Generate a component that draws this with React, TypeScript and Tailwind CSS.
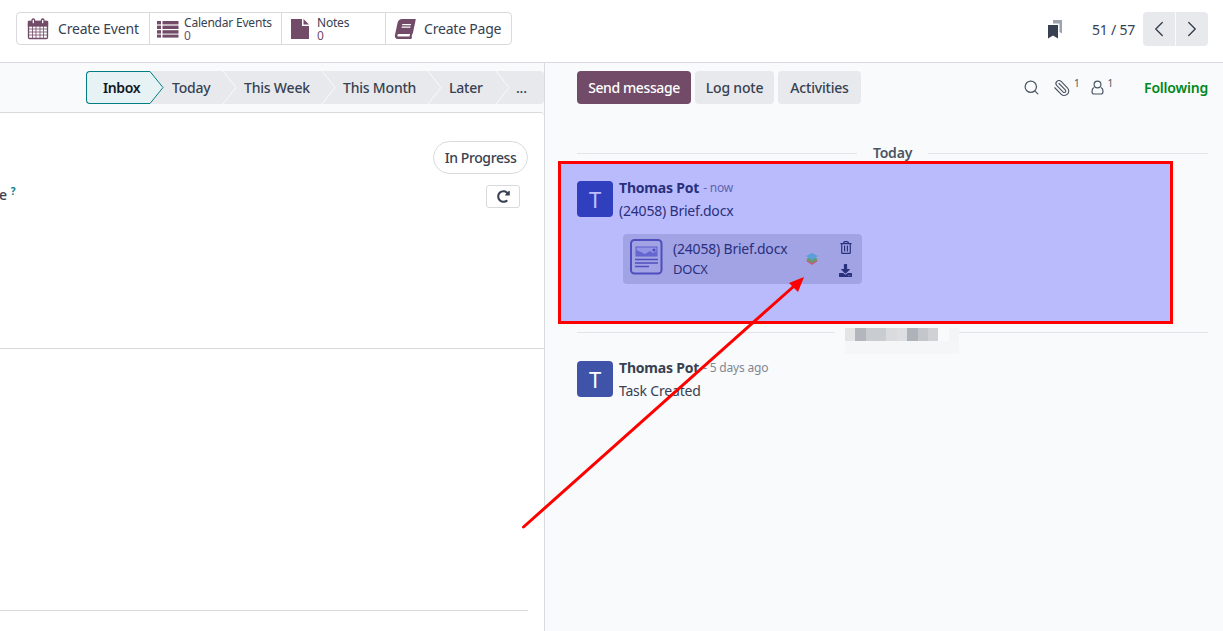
import { ChevronLeft, ChevronRight, Search, Paperclip } from "lucide-react";
import { FaBook, FaDownload, FaRedoAlt, FaRegTrashAlt } from "react-icons/fa";

const FONT = "font-['Noto_Sans',sans-serif]";

function CalendarIcon() {
  return (
    <svg width="22" height="22" viewBox="0 0 22 22" fill="none" stroke="#714b67" strokeWidth="1.3">
      <rect x="1.5" y="3.5" width="19" height="17" rx="1" />
      <rect x="1.5" y="3.5" width="19" height="4.5" fill="#714b67" />
      <path d="M1.5 11h19M1.5 14h19M1.5 17h19M5.5 8v12M9 8v12M13 8v12M16.500 8v12" strokeWidth="1" opacity="0.8" />
      <rect x="5" y="1" width="2.6" height="5" rx="1.2" fill="#fff" />
      <rect x="14.4" y="1" width="2.6" height="5" rx="1.2" fill="#fff" />
    </svg>
  );
}

function ListIcon() {
  return (
    <svg width="22" height="18" viewBox="0 0 22 18" fill="#714b67">
      <rect x="0" y="1" width="4" height="3.4" />
      <rect x="5.5" y="1" width="16" height="3.4" />
      <rect x="0" y="5.6" width="4" height="3.4" />
      <rect x="5.5" y="5.6" width="16" height="3.4" />
      <rect x="0" y="10.2" width="4" height="3.4" />
      <rect x="5.5" y="10.2" width="16" height="3.4" />
      <rect x="0" y="14.6" width="4" height="3" />
      <rect x="5.5" y="14.6" width="16" height="3" />
    </svg>
  );
}

function FileIcon() {
  return (
    <svg width="18" height="20" viewBox="0 0 18 20" fill="#714b67">
      <path d="M0 0h11v7h7v13H0z" />
      <path d="M12.500 0L18 5.500h-5.500z" />
    </svg>
  );
}

function BookmarksIcon() {
  return (
    <svg width="14" height="19" viewBox="0 0 14 19">
      <path d="M5 0h9v13.500L11.500 12V3.500H5z" fill="#9ca3af" />
      <path d="M0 5h10v13.500L5 15.500 0 18.500z" fill="#374151" />
    </svg>
  );
}

function UserIcon() {
  return (
    <svg width="13" height="15" viewBox="0 0 13 15" fill="none" stroke="#4b5563" strokeWidth="1.2">
      <circle cx="6.500" cy="4.500" r="3.400" />
      <path d="M2.800 7.500C1.400 8.500 1 10 1 11.500 1 13 2 14 3 14h7c1 0 2-1 2-2.500 0-1.500-.4-3-1.800-4" />
    </svg>
  );
}

function DocIcon() {
  return (
    <svg width="33" height="36" viewBox="0 0 33 36" fill="none">
      <rect x="1" y="1" width="30.500" height="33.500" rx="3.500" stroke="#6868a8" strokeWidth="2" />
      <rect x="6" y="8" width="21" height="9" fill="#c6c6de" stroke="#6868a8" strokeWidth="0.8" />
      <path d="M6 11l5 2 4 2 5-3 3 2 4-2v5H6z" fill="#8888c0" />
      <circle cx="24" cy="11" r="1.600" fill="#6868a8" />
      <path d="M5 20.500h23M5 24h23M5 27.500h14" stroke="#6868a8" strokeWidth="1.500" />
    </svg>
  );
}

function LayersIcon() {
  return (
    <svg width="14" height="14" viewBox="0 0 14 14">
      <path d="M1 9 7 6l6 3-6 4z" fill="#ff8054" />
      <path d="M1 7 7 4l6 3-6 4z" fill="#7fd43f" />
      <path d="M1 4 7 1l6 3-6 4z" fill="#78d4d0" />
    </svg>
  );
}

function ActionCell({ width, icon, label, count }: { width: string; icon: React.ReactNode; label: string; count?: string }) {
  return (
    <div className={`flex items-center border-r border-[#d8dadd] last:border-r-0 ${width}`}>
      {icon}
      {count ? (
        <div className="flex flex-col text-[12px] leading-[13px] text-[#374151]">
          <div className="h-[13px]">{label}</div>
          <div className="h-[13px] text-[#714b67]">{count}</div>
        </div>
      ) : (
        <span className="text-[14px] text-[#374151]">{label}</span>
      )}
    </div>
  );
}

function StatusStep({ label, width }: { label: string; width: string }) {
  return (
    <div className={`relative flex h-full items-center ${width}`}>
      <span className="text-[14px] font-medium text-[#374151]">{label}</span>
    </div>
  );
}

function Chevron({ x }: { x: number }) {
  return <path d={`M${x - 13} 0L${x} 16.500L${x - 13} 33`} fill="none" stroke="#f9fafb" strokeWidth="1" />;
}

function Message({ time, color, body }: { time: string; color: string; body: string }) {
  return (
    <div className="flex gap-[6px]">
      <div className={`flex h-9 w-9 shrink-0 items-center justify-center rounded-[4px] text-[22px] text-white ${color}`}>T</div>
      <div>
        <div className="flex h-[14px] items-center leading-[14px]">
          <span className="text-[14px] font-bold text-[#374151]">Thomas Pot</span>
          <span className="ml-[4px] text-[12px] text-[#7f8793]">- {time}</span>
        </div>
        <div className="mt-[6px] text-[14px] leading-[20px] text-[#374151]">{body}</div>
      </div>
    </div>
  );
}

export default function App() {
  return (
    <div className={`relative flex h-[631px] w-[1223px] flex-col overflow-hidden bg-white tracking-[-0.2px] ${FONT}`}>
      {/* Control panel */}
      <header className="flex h-[63px] shrink-0 items-start justify-between border-b border-[#d8dadd] pl-4 pr-[15px] pt-3">
        <div className="flex h-[33px] rounded-[4px] border border-[#d8dadd]">
          <ActionCell width="w-[133px] pl-[10px]" icon={<span className="mr-[9px] flex"><CalendarIcon /></span>} label="Create Event" />
          <ActionCell width="w-[132px] pl-[7px]" icon={<span className="mr-[5px] flex"><ListIcon /></span>} label="Calendar Events" count="0" />
          <ActionCell width="w-[104px] pl-[9px]" icon={<span className="mr-[8px] flex"><FileIcon /></span>} label="Notes" count="0" />
          <ActionCell width="w-[125px] pl-[9px]" icon={<FaBook className="mr-[9px] h-[20px] w-[20px] -skew-x-12 text-[#714b67]" />} label="Create Page" />
        </div>
        <div className="flex items-center">
          <BookmarksIcon />
          <span className="ml-[30px] mr-2 text-[14px] text-[#374151]">51 / 57</span>
          <div className="flex h-[34px] w-[65px] overflow-hidden rounded-[4px] bg-[#e7e9ed]">
            <div className="flex flex-1 items-center justify-center border-r border-[#f9fafb]">
              <ChevronLeft size={26} strokeWidth={1.3} className="text-[#374151]" />
            </div>
            <div className="flex flex-1 items-center justify-center">
              <ChevronRight size={26} strokeWidth={1.3} className="text-[#374151]" />
            </div>
          </div>
        </div>
      </header>

      <div className="flex min-h-0 flex-1 bg-[#f9fafb]">
        {/* Form side */}
        <div className="flex w-[545px] shrink-0 flex-col border-r border-[#d8dadd]">
          <div className="flex h-[49px] shrink-0 items-start justify-end pt-2">
            <div className="relative flex h-[33px] w-[458px] rounded-[4px] bg-[#e7e9ed] text-center">
              <div className="flex h-full w-[64px] items-center rounded-l-[4px] border border-r-0 border-[#017e84] bg-[#e6f2f3] pl-4">
                <span className="text-[14px] font-semibold tracking-[-0.4px] text-[#111827]">Inbox</span>
              </div>
              <svg className="absolute left-[64px] top-0" width="14" height="33" viewBox="0 0 14 33">
                <path d="M0 .5L13 16.500L0 32.500" fill="#e6f2f3" stroke="#017e84" strokeWidth="1" />
              </svg>
              <StatusStep label="Today" width="ml-[22px] w-[72px]" />
              <StatusStep label="This Week" width="w-[99px]" />
              <StatusStep label="This Month" width="w-[106px]" />
              <StatusStep label="Later" width="w-[67px]" />
              <StatusStep label="..." width="w-[20px]" />
              <svg className="pointer-events-none absolute left-0 top-0" width="458" height="33" viewBox="0 0 458 33">
                <Chevron x={150} />
                <Chevron x={249} />
                <Chevron x={355} />
                <Chevron x={423} />
              </svg>
            </div>
          </div>
          <div className="flex flex-1 flex-col rounded-tr-[4px] border-t border-[#d8dadd] bg-white">
            <div className="flex h-[236px] shrink-0 flex-col border-b border-[#d8dadd] pr-4">
              <div className="mt-[28px] flex justify-end">
                <div className="flex h-[33px] w-[95px] items-center justify-center rounded-full border border-[#d8dadd] text-[14px] font-medium tracking-[-0.4px] text-[#374151]">
                  In Progress
                </div>
              </div>
              <div className="mt-[11px] flex items-start justify-between pr-2">
                <span className="-ml-[1px] text-[14px] font-medium leading-[20px] text-[#374151]">
                  e<sup className="ml-[4px] text-[10px] font-bold text-[#017e84]">?</sup>
                </span>
                <div className="flex h-[23px] w-[34px] items-center justify-center rounded-[3px] border border-[#d8dadd]">
                  <FaRedoAlt className="h-[13px] w-[13px] text-[#374151]" />
                </div>
              </div>
            </div>
            <div className="mr-4 mt-[261px] border-t border-[#d8dadd]" />
          </div>
        </div>

        {/* Chatter */}
        <div className="flex min-w-0 flex-1 flex-col pl-[32px] pr-[15px] pt-2">
          <div className="flex h-[33px] items-center gap-1">
            <div className="flex h-full w-[114px] items-center justify-center rounded-[4px] bg-[#714b67] text-[14px] font-medium tracking-[-0.4px] text-white">Send message</div>
            <div className="flex h-full w-[79px] items-center justify-center rounded-[4px] bg-[#e7e9ed] text-[14px] font-medium text-[#374151]">Log note</div>
            <div className="flex h-full w-[83px] items-center justify-center rounded-[4px] bg-[#e7e9ed] text-[14px] font-medium text-[#374151]">Activities</div>
            <div className="ml-auto flex items-center text-[#4b5563]">
              <Search size={17} strokeWidth={1.7} />
              <Paperclip size={18} strokeWidth={1.5} className="ml-[13px] -scale-x-100" />
              <sup className="ml-[3px] text-[10px]">1</sup>
              <span className="ml-[11px] flex"><UserIcon /></span>
              <sup className="ml-[4px] text-[10px]">1</sup>
              <span className="ml-[31px] text-[14px] font-semibold text-[#008818]">Following</span>
            </div>
          </div>

          <div className="mt-[41px] flex items-center">
            <div className="h-px flex-1 bg-[#e2e4e8]" />
            <span className="px-4 text-[14px] font-semibold leading-[16px] text-[#4b5563]">Today</span>
            <div className="h-px flex-1 bg-[#e2e4e8]" />
          </div>

          <div className="mt-[20px]">
            <Message time="now" color="bg-[#3f54a8]" body="(24058) Brief.docx" />
            <div className="ml-[46px] mt-[13px] flex h-[50px] w-[239px] items-center rounded-[4px] bg-[#d8dadd] pl-[7px] pr-[10px]">
              <span className="-mt-[4px] flex"><DocIcon /></span>
              <div className="ml-[10px] text-[14px] leading-[20px] text-[#374151]">
                <div>(24058) Brief.docx</div>
                <div className="text-[13px]">DOCX</div>
              </div>
              <span className="ml-auto mr-[20px] flex"><LayersIcon /></span>
              <div className="flex flex-col items-center gap-[10px] text-[#374151]">
                <FaRegTrashAlt className="h-[13px] w-[12px]" />
                <FaDownload className="h-[13px] w-[13px]" />
              </div>
            </div>
          </div>

          <div className="mt-[44px] flex items-start">
            <div className="mt-[4px] h-px w-[258px] bg-[#e2e4e8]" />
            <div className="ml-[10px] flex h-[26px] w-[114px] flex-col">
              <div className="flex h-[13px]">
                <div className="flex-1 bg-[#e3e4e6]" />
                <div className="flex-1 bg-[#b3b7bd]" />
                <div className="flex-1 bg-[#c9ccd1]" />
                <div className="flex-1 bg-[#c9ccd1]" />
                <div className="flex-1 bg-[#d9dbdf]" />
                <div className="flex-1 bg-[#dcdee1]" />
                <div className="flex-1 bg-[#aeb2b9]" />
                <div className="flex-1 bg-[#c3c6cb]" />
                <div className="flex-1 bg-[#cfd1d5]" />
                <div className="flex-1 bg-[#f9fafb]" />
                <div className="flex-1 bg-[#f4f5f6]" />
              </div>
              <div className="h-[13px] w-full bg-[#f5f6f7]" />
            </div>
            <div className="mt-[4px] h-px flex-1 bg-[#e2e4e8]" />
          </div>

          <div className="mt-[7px]">
            <Message time="5 days ago" color="bg-[#3f54a8]" body="Task Created" />
          </div>
        </div>
      </div>

      {/* Annotation laid over the screenshot */}
      <div className="absolute left-[558px] top-[161px] h-[163px] w-[615px] border-[3px] border-[#ff0000] bg-[#0000ff]/25" />
      <svg className="pointer-events-none absolute left-0 top-0" width="1223" height="631" viewBox="0 0 1223 631">
        <path d="M523.500 527L793 287" stroke="#ff0000" strokeWidth="3" strokeLinecap="round" />
        <path d="M804 277L789 283L798 292z" fill="#ff0000" />
      </svg>
    </div>
  );
}
